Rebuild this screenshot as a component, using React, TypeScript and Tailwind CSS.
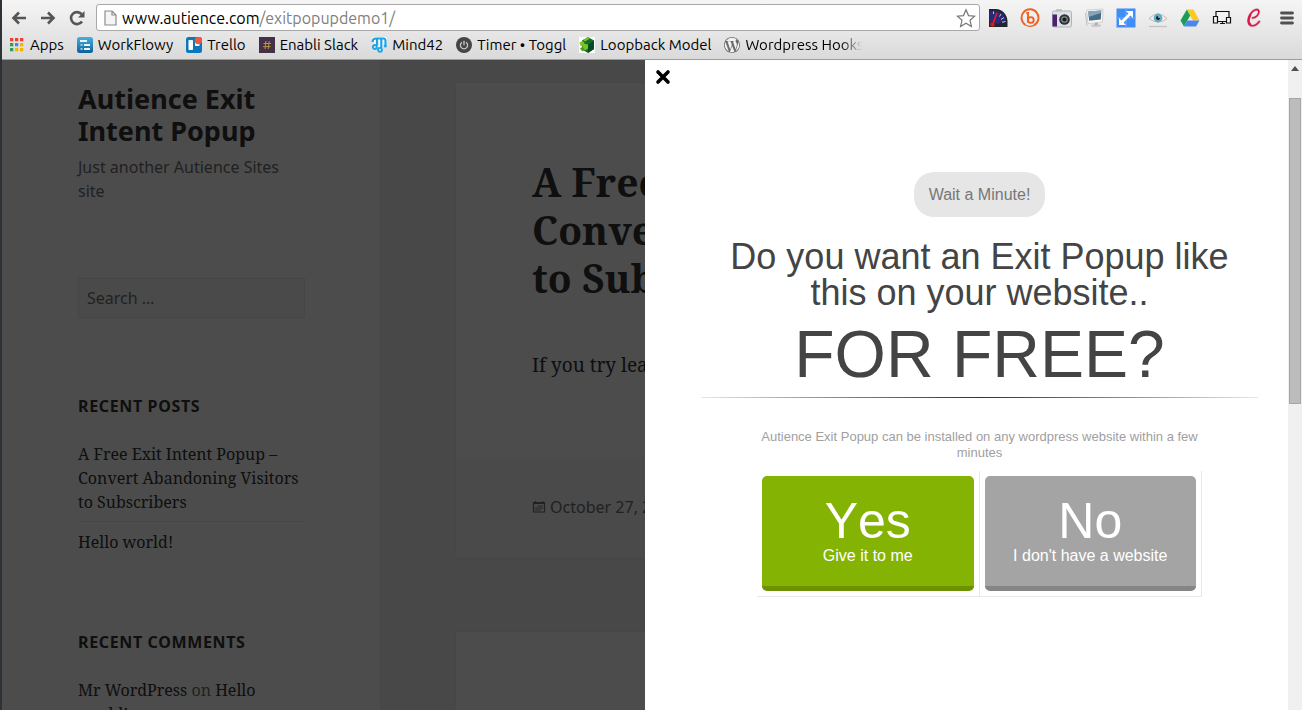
import React from 'react';

type IconProps = { className?: string };

const WorkFlowyIcon = () => (
  <svg viewBox="0 0 16 16" className="size-4 shrink-0" aria-hidden="true">
    <defs>
      <linearGradient id="wf" x1="0" y1="0" x2="0" y2="1">
        <stop offset="0" stopColor="#49b0de" />
        <stop offset="1" stopColor="#0d5f9b" />
      </linearGradient>
    </defs>
    <rect width="16" height="16" rx="2.500" fill="url(#wf)" />
    <path d="M3 4h7M7 8h6M7 12h6" stroke="#e6f5fb" strokeWidth="1.800" />
    <path d="M3.500 8h2M3.500 12h2" stroke="#bfe4f5" strokeWidth="1.500" />
  </svg>
);

const TrelloIcon = () => (
  <svg viewBox="0 0 16 16" className="size-4 shrink-0" aria-hidden="true">
    <rect y="0" width="16" height="16" rx="2.500" fill="#0a78bd" />
    <rect x="2.500" y="3" width="4.500" height="10" rx="0.800" fill="#fff" />
    <rect x="9" y="3" width="4.500" height="6" rx="0.800" fill="#fff" />
    <circle cx="12.300" cy="3.600" r="3.700" fill="#eb5a46" />
  </svg>
);

const SlackIcon = () => (
  <svg viewBox="0 0 16 16" className="size-4 shrink-0" aria-hidden="true">
    <rect width="16" height="16" fill="#453147" />
    <path d="M7 4 6 12M10.200 4 9.200 12M4.500 6.500h7.500M4 9.600h7.500" stroke="#b9913a" strokeWidth="1" />
  </svg>
);

const MindIcon = () => (
  <svg viewBox="0 0 16 16" className="size-4 shrink-0" aria-hidden="true">
    <path d="M2 4.500Q2 1.500 5 1.500h7.500q2 0 2 2.500v4M5.500 2v6M10 2v10" fill="none" stroke="#fff" strokeWidth="4" />
    <path d="M1.500 5Q1.500 1.500 5 1.500h7.500q2 0 2 2.500v4M6 2v6.500M10.300 2v9" fill="none" stroke="#1ba4e6" strokeWidth="2.200" />
    <circle cx="3.800" cy="10" r="2" fill="none" stroke="#1ba4e6" strokeWidth="1.800" />
    <circle cx="9" cy="12.800" r="2" fill="none" stroke="#1ba4e6" strokeWidth="1.800" />
    <circle cx="14.300" cy="9" r="1.500" fill="#1ba4e6" />
  </svg>
);

const TogglIcon = () => (
  <svg viewBox="0 0 16 16" className="size-4 shrink-0" aria-hidden="true">
    <circle cx="8" cy="8" r="8" fill="#454545" />
    <path d="M6 5.200a3.600 3.600 0 1 0 4 0M8 3.800v4.400" fill="none" stroke="#c8c8c8" strokeWidth="1.300" />
  </svg>
);

const LoopbackIcon = () => (
  <svg viewBox="0 0 16 16" className="size-4 shrink-0" aria-hidden="true">
    <rect width="16" height="16" fill="#fff" />
    <path d="M9 0l6 3.500v8.500L9 16l-6-3.500V3.500z" fill="#146b2a" />
    <path d="M9 8l6-4.500v8.500L9 16z" fill="#074a25" />
    <path d="M4 3l5-2.800 2 1.300-5 3zM0.500 5.500l3-1.500 2 1.500-1 3-3 .5zM5 6.500l4 1v4l-3 2-3-3z" fill="#7cc31f" />
    <path d="M1 11l3-1 1.500 2-1.500 2.500L2 13z" fill="#4a9e25" />
  </svg>
);

const WordPressIcon = () => (
  <svg viewBox="0 0 24 24" className="size-4 shrink-0" aria-hidden="true">
    <circle cx="12" cy="12" r="11.500" fill="#f2f2f2" />
    <path
      fill="#6c6c6c"
      d="M21.469 6.825c.84 1.537 1.318 3.300 1.318 5.175 0 3.979-2.156 7.456-5.363 9.325l3.295-9.527c.615-1.540.82-2.771.82-3.864 0-.405-.026-.780-.07-1.110m-7.981.105c.647-.03 1.232-.105 1.232-.105.582-.075.514-.930-.067-.899 0 0-1.755.135-2.880.135-1.064 0-2.850-.150-2.850-.150-.585-.030-.661.855-.075.885 0 0 .540.061 1.125.090l1.680 4.605-2.370 7.080L5.354 6.900c.649-.030 1.234-.100 1.234-.100.585-.075.516-.930-.065-.896 0 0-1.746.138-2.874.138-.200 0-.438-.008-.690-.015C4.911 3.150 8.235 1.215 12 1.215c2.809 0 5.365 1.072 7.286 2.833-.046-.003-.091-.009-.141-.009-1.060 0-1.812.923-1.812 1.914 0 .890.513 1.643 1.060 2.531.411.720.890 1.643.890 2.977 0 .915-.354 1.994-.821 3.479l-1.075 3.585-3.900-11.610.001.014zM12 22.784c-1.059 0-2.081-.153-3.048-.437l3.237-9.406 3.315 9.087c.024.053.050.101.078.149-1.120.393-2.325.609-3.582.609M1.211 12c0-1.564.336-3.050.935-4.390L7.290 21.709C3.694 19.960 1.212 16.271 1.211 12M12 0C5.385 0 0 5.385 0 12s5.385 12 12 12 12-5.385 12-12S18.615 0 12 0"
    />
  </svg>
);

const AppsIcon = () => {
  const colors = ['#ea4335', '#ea4335', '#ea4335', '#2f9e4f', '#4285f4', '#f4b400', '#2f9e4f', '#f4b400', '#f4b400'];
  return (
    <svg viewBox="0 0 14 14" className="size-3.5 shrink-0" aria-hidden="true">
      {colors.map((c, i) => (
        <rect key={i} x={(i % 3) * 5} y={Math.floor(i / 3) * 5} width="3.300" height="3.300" fill={c} />
      ))}
    </svg>
  );
};

const bookmarks = [
  { label: 'WorkFlowy', icon: <WorkFlowyIcon /> },
  { label: 'Trello', icon: <TrelloIcon /> },
  { label: 'Enabli Slack', icon: <SlackIcon /> },
  { label: 'Mind42', icon: <MindIcon /> },
  { label: 'Timer • Toggl', icon: <TogglIcon /> },
  { label: 'Loopback Model', icon: <LoopbackIcon /> },
];

const Arrow = ({ className = '' }: IconProps) => (
  <svg viewBox="0 0 16 16" className={`size-4 ${className}`} aria-hidden="true">
    <path d="M15 8H3M8 2.500 2.500 8 8 13.500" fill="none" stroke="#555" strokeWidth="2.600" />
  </svg>
);

const extensions = [
  {
    label: 'Speed dial',
    icon: (
      <svg viewBox="0 0 20 20" className="size-5">
        <path d="M1 19V1h7c6 0 11 5 11.500 12v6z" fill="#232330" />
        <path d="M1.500 14V3h6c5 0 9 4 10.500 9l-8 4z" fill="#2b2a78" />
        <path d="M4.500 17 9 5" stroke="#f01d1d" strokeWidth="1.600" />
        <circle cx="4.500" cy="16.500" r="2.200" fill="#d01b22" />
        <path d="M13 6 11.500 8.500M16 9.500 13 11.500M17.500 13.500l-3.500.8M5.500 3.500v2.500" stroke="#c9c9e0" strokeWidth="1" />
      </svg>
    ),
  },
  {
    label: 'Bitly',
    icon: (
      <svg viewBox="0 0 20 20" className="size-5">
        <path d="M5.500 17A8.500 8.500 0 1 1 14 17.300" fill="none" stroke="#ee6123" strokeWidth="1.900" />
        <path d="M5.500 17q4 2.500 8.500.3" fill="none" stroke="#ee6123" strokeWidth="1.300" />
        <path d="M6.300 5h1.700v9.500" fill="none" stroke="#ee6123" strokeWidth="1.900" />
        <circle cx="10.800" cy="12" r="2.900" fill="none" stroke="#ee6123" strokeWidth="1.900" />
      </svg>
    ),
  },
  {
    label: 'Screenshot',
    icon: (
      <svg viewBox="0 0 20 20" className="size-5">
        <rect x="4" y="1" width="6" height="4" rx="1" fill="#c3c7ca" />
        <rect x="0.500" y="3" width="19" height="16" rx="1.500" fill="#dfe2e4" stroke="#b0b4b7" />
        <rect x="0.500" y="6.500" width="4.500" height="12" fill="#4c2170" />
        <circle cx="12.500" cy="11.500" r="5.300" fill="#2e3235" />
        <circle cx="12.500" cy="11.500" r="3.300" fill="#858c92" />
        <circle cx="12.500" cy="11.500" r="2.100" fill="#17191c" />
      </svg>
    ),
  },
  {
    label: 'Screen capture',
    icon: (
      <svg viewBox="0 0 20 20" className="size-5">
        <ellipse cx="12" cy="17.500" rx="5" ry="1.500" fill="#c9c9c9" />
        <path d="M1.500 5 3 18" stroke="#c4c4c4" strokeWidth="1" />
        <path d="M10 13l3.500-.5.500 4-3 .8z" fill="#aaa" />
        <path d="M2.500 2 19 1l-.5 13-14.500 1.500z" fill="#f8f8f8" stroke="#c7c7c7" strokeWidth=".8" />
        <path d="M4.300 3.500 17.300 2.500l-.5 9L5.200 12.700z" fill="#446b87" />
        <path d="M4.600 9 16.900 5 17.300 2.500 4.300 3.500z" fill="#86a5b8" />
      </svg>
    ),
  },
  {
    label: 'Resize window',
    icon: (
      <svg viewBox="0 0 20 20" className="size-5">
        <rect x="0.500" y="0.500" width="19" height="19" fill="#3f8df5" />
        <path d="M10 0v20M0 10h20" stroke="#73aefb" strokeWidth="1" />
        <path d="M6 14 14 6" stroke="#fff" strokeWidth="3" />
        <path d="M10 3h7v7zM3 10v7h7z" fill="#fff" />
      </svg>
    ),
  },
  {
    label: 'Eye',
    icon: (
      <svg viewBox="0 0 20 20" className="size-5">
        <path d="M1 18.500h18" stroke="#c4c4c4" strokeWidth="1.300" />
        <path d="M1 10.500Q10 1.500 19 10.500 10 17.500 1 10.500z" fill="#edf2f3" stroke="#c9b9a8" strokeWidth="1" />
        <circle cx="10" cy="10" r="4.400" fill="#62acca" />
        <circle cx="10" cy="10" r="2" fill="#10242e" />
        <circle cx="11" cy="9" r=".8" fill="#fff" />
      </svg>
    ),
  },
  {
    label: 'Drive',
    icon: (
      <svg viewBox="0 0 20 20" className="size-5">
        <path d="M6.800 1.500h6.700l6 11h-6.700z" fill="#fbc924" />
        <path d="M6.800 1.500 10.200 7.500 4 18.500.5 12.500z" fill="#1b9d58" />
        <path d="M7.300 12.500h12.200l-3.500 6H4z" fill="#4a86ec" />
      </svg>
    ),
  },
  {
    label: 'Responsive view',
    icon: (
      <svg viewBox="0 0 20 20" className="size-5" fill="#f4f4f4" stroke="#111" strokeWidth="1.200">
        <path d="M4 3.500h13v10H4zM8 15.500h5M10.500 13.500v2" />
        <path d="M1.500 8.500h4v6.500h-4zM14.500 9.500h4v5.500h-4z" />
      </svg>
    ),
  },
  {
    label: 'Clip',
    icon: (
      <svg viewBox="0 0 20 20" className="size-5" fill="none" strokeLinecap="round">
        <path d="M8.500 10c4-.5 7-4 6.300-7C14 .5 9.500 1.500 6.800 5.500c-3.300 5-3.300 10.500 0 12 3 1 6.200-1 8.500-4" stroke="#e2c6ce" strokeWidth="3" />
        <path d="M8.500 10c4-.5 7-4 6.300-7C14 .5 9.500 1.500 6.800 5.500c-3.300 5-3.300 10.500 0 12 3 1 6.200-1 8.500-4" stroke="#db1748" strokeWidth="1.600" />
        <path d="M6.200 7c-2 4-2 8 0 9.500" stroke="#db1748" strokeWidth="2.400" />
      </svg>
    ),
  },
];

function Browser() {
  return (
    <header className="flex h-15 shrink-0 flex-col border-b border-[#9d9d9d] bg-linear-to-b from-[#f5f5f5] to-[#dadada] font-['Ubuntu','Noto_Sans',sans-serif] text-black">
      <div className="flex items-center pt-1 pr-1">
        <nav className="flex w-[94px] items-center gap-[13px] pl-[9px]" aria-label="History">
          <button aria-label="Back"><Arrow /></button>
          <button aria-label="Forward"><Arrow className="rotate-180" /></button>
          <button aria-label="Reload">
            <svg viewBox="0 0 16 16" className="size-4" aria-hidden="true">
              <path d="M13 11.500A6 6 0 1 1 12.600 4.200" fill="none" stroke="#555" strokeWidth="2.600" />
              <path d="M15.500 1v6.500H9z" fill="#555" />
            </svg>
          </button>
        </nav>
        <div className="flex h-[27px] flex-1 items-center rounded-[3px] border border-[#a8a8a8] bg-white pr-[3px] pl-[7px]">
          <svg viewBox="0 0 13 16" className="h-4 w-[13px]" aria-hidden="true">
            <path d="M1 1h7l4 4v10H1zM8 1v4h4" fill="#f5f5f5" stroke="#8c8c8c" strokeWidth="1.200" />
          </svg>
          <a href="#top" className="ml-[5px] flex-1 text-base leading-6">
            www.autience.com<span className="text-[#808080]">/exitpopupdemo1/</span>
          </a>
          <button aria-label="Bookmark this page">
            <svg viewBox="0 0 20 20" className="size-5" aria-hidden="true">
              <path d="m10 1.800 2.500 5.800 6.200.6-4.700 4.100 1.400 6.100L10 15.200l-5.400 3.200L6 12.300 1.300 8.200l6.200-.6z" fill="#fff" stroke="#777" strokeWidth="1.200" />
            </svg>
          </button>
        </div>
        <div className="flex items-center gap-3 pl-2">
          {extensions.map((e) => (
            <button key={e.label} aria-label={e.label}>{e.icon}</button>
          ))}
        </div>
        <button aria-label="Menu" className="ml-4 pr-1">
          <svg viewBox="0 0 14 14" className="size-3.5" aria-hidden="true">
            <path d="M1.500 2h11M1.500 7h11M1.500 12h11" stroke="#505050" strokeWidth="2.800" strokeLinecap="round" />
          </svg>
        </button>
      </div>
      <nav className="flex flex-1 items-center gap-[13px] pb-px pl-2 text-[15px] leading-5 whitespace-nowrap" aria-label="Bookmarks">
        <a href="#apps" className="flex items-center gap-[6px]"><AppsIcon />Apps</a>
        {bookmarks.map((b) => (
          <a key={b.label} href="#bookmark" className="flex items-center gap-[5px]">{b.icon}{b.label}</a>
        ))}
        <a href="#bookmark" className="flex w-[138px] items-center gap-[5px] overflow-hidden [mask-image:linear-gradient(to_right,black_85%,transparent)]">
          <WordPressIcon />Wordpress Hooks
        </a>
      </nav>
    </header>
  );
}

function Sidebar() {
  return (
    <aside className="w-[29.4%] shrink-0 bg-white pr-[75px] pl-[76px] font-['Noto_Sans',sans-serif] shadow-[0_0_1px_rgba(0,0,0,0.15)]">
      <h1 className="pt-[23px] text-[27px] leading-8 font-bold text-[#333]">Autience Exit Intent Popup</h1>
      <p className="mt-2 text-base leading-6 text-[#707070]">Just another Autience Sites site</p>
      <input
        type="search"
        aria-label="Search"
        placeholder="Search …"
        className="mt-[75px] h-10 w-full border border-[#eaeaea] bg-[#f7f7f7] px-2 text-base placeholder:text-[#707070]"
      />
      <h2 className="mt-[76px] text-base leading-6 font-bold tracking-[0.04em] text-[#333]">RECENT POSTS</h2>
      <ul className="mt-6 font-['Noto_Serif','Droid_Serif','DejaVu_Serif_Condensed','DejaVu_Serif',serif] text-base leading-6 text-[#333]">
        <li className="border-b border-[#eaeaea] pb-[7px]"><a href="#post">A Free Exit Intent Popup – Convert Abandoning Visitors to Subscribers</a></li>
        <li className="pt-2"><a href="#hello">Hello world!</a></li>
      </ul>
      <h2 className="mt-[76px] text-base leading-6 font-bold tracking-[0.04em] text-[#333]">RECENT COMMENTS</h2>
      <p className="mt-6 font-['Noto_Serif','Droid_Serif','DejaVu_Serif_Condensed','DejaVu_Serif',serif] text-base leading-6 text-[#707070]">
        <a href="#author" className="text-[#333]">Mr WordPress</a> on <a href="#hello" className="text-[#333]">Hello world!</a>
      </p>
    </aside>
  );
}

function Blog() {
  return (
    <main className="flex min-w-0 flex-1 flex-col gap-[74px] pt-[23px] pr-[75px] pl-[76px] font-['Noto_Serif','Droid_Serif','DejaVu_Serif_Condensed','DejaVu_Serif',serif] text-[#333]">
      <article className="bg-white shadow-[0_0_1px_rgba(0,0,0,0.2)]">
        <div className="px-[76px] pt-[75px] pb-[76px]">
          <h2 className="text-[39px] leading-12 font-bold">A Free Exit Intent Popup – Convert Abandoning Visitors to Subscribers</h2>
          <p className="mt-[47px] truncate text-[19px] leading-8">If you try leaving this page, the popup appears.</p>
        </div>
        <footer className="flex items-center gap-1 bg-[#f7f7f7] px-[76px] pt-[38px] pb-[39px] font-['Noto_Sans',sans-serif] text-base leading-6 text-[#707070]">
          <svg viewBox="0 0 14 14" className="size-3.5" aria-hidden="true">
            <path d="M1.500 2.500h11v9.500h-11zM3.500 1v2M10.500 1v2M1.500 3.500h11" fill="none" stroke="#707070" strokeWidth="1.200" />
            <path d="M5.500 6h5.500M3 8h8M3 10h6" stroke="#707070" strokeWidth=".9" />
          </svg>
          <time>October 27, 2014</time>
        </footer>
      </article>
      <article className="h-80 bg-white shadow-[0_0_1px_rgba(0,0,0,0.2)]" />
    </main>
  );
}

function Popup() {
  return (
    <section
      role="dialog"
      aria-label="Exit popup"
      className="absolute inset-y-0 right-0 w-1/2 bg-white font-['Liberation_Sans',Arial,sans-serif]"
    >
      <button aria-label="Close" className="mt-[9px] ml-[10px] block">
        <svg viewBox="0 0 16 16" className="size-4" aria-hidden="true">
          <path d="m3 3 10 10M13 3 3 13" stroke="#000" strokeWidth="3.600" strokeLinecap="round" />
        </svg>
      </button>
      <div className="mt-[87px] mr-[30px] ml-[56px] flex flex-col items-center text-center">
        <p className="rounded-[20px] bg-[#e6e6e6] px-[15px] py-[10px] text-base leading-[25px] text-[#777]">Wait a Minute!</p>
        <h2 className="mt-[22px] text-4xl leading-9 text-[#444]">Do you want an Exit Popup like this on your website..</h2>
        <p className="mt-[10px] text-[66px] leading-[66px] text-[#444]">FOR FREE?</p>
        <hr className="mt-[10px] h-px w-full border-0 bg-linear-to-r from-[#e8e8e8] via-[#333] to-[#e8e8e8]" />
        <p className="mt-[31px] w-[445px] text-[13px] leading-4 text-[#a0a0a0]">
          Autience Exit Popup can be installed on any wordpress website within a few minutes
        </p>
        <div className="mt-[10px] grid w-[445px] grid-cols-2 border-b border-[#e8e8e8] text-white">
          <div className="border-r border-[#e8e8e8] p-[5px]">
            <button className="flex h-[115px] w-full flex-col items-center rounded-[5px] border-b-[5px] border-[#6c9203] bg-[#85b304] pt-5">
              <span className="text-[50px] leading-[50px] [font-kerning:none]">Yes</span>
              <span className="text-base leading-5">Give it to me</span>
            </button>
          </div>
          <div className="border-r border-[#e8e8e8] p-[5px]">
            <button className="flex h-[115px] w-full flex-col items-center rounded-[5px] border-b-[5px] border-[#858585] bg-[#a4a4a4] pt-5">
              <span className="text-[50px] leading-[50px] [font-kerning:none]">No</span>
              <span className="text-base leading-5">I don't have a website</span>
            </button>
          </div>
        </div>
      </div>
    </section>
  );
}

export default function App() {
  return (
    <div className="flex h-screen flex-col overflow-hidden border-l-2 border-[#2c3236]">
      <Browser />
      <div className="flex min-h-0 flex-1">
        <div className="relative flex min-w-0 flex-1 overflow-hidden bg-[#f1f1f1]">
          <Sidebar />
          <Blog />
          <div className="absolute inset-0 bg-black/70" />
          <Popup />
        </div>
        <div className="flex w-[14px] shrink-0 flex-col items-center gap-[27px] bg-[#f0f0f0] pt-[6px]" aria-hidden="true">
          <svg viewBox="0 0 8 5" className="h-[5px] w-2"><path d="M0 5 4 0l4 5z" fill="#505050" /></svg>
          <div className="h-[306px] w-3 border border-[#a6a6a6] bg-[#bcbcbc]" />
        </div>
      </div>
    </div>
  );
}
